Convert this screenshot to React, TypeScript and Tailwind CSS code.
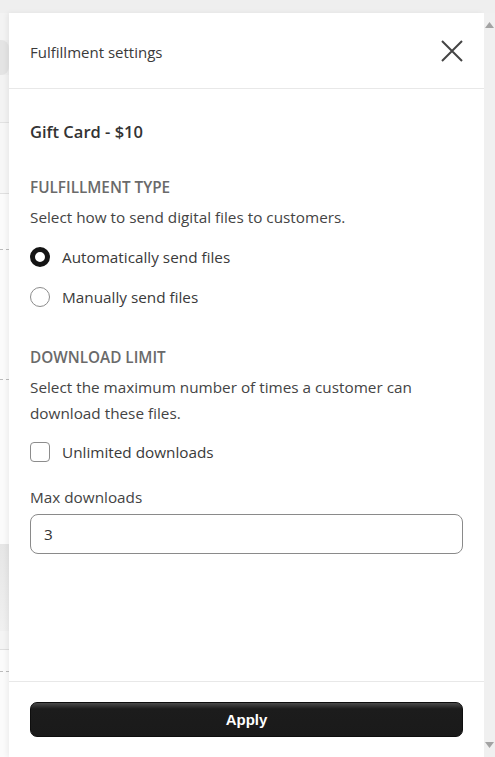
import React from 'react';

const font = { fontFamily: '"Open Sans", "Noto Sans", sans-serif' };

function BackdropStrip() {
  // the page behind the drawer, only a sliver of it shows on the left
  return (
    <div className="w-[9px] flex flex-col shrink-0">
      <div className="h-[27px] bg-[#f3f3f3]" />
      <div className="h-[35px] bg-[#e4e4e4] rounded-r-[8px]" />
      <div className="h-[47px] bg-[#f3f3f3]" />
      <div className="h-[71px] bg-[#f7f7f7] border-t border-[#e2e2e2]" />
      <div className="h-[56px] bg-[#fbfbfb] border-t border-[#e0e0e0]" />
      <div className="h-[130px] bg-[#fbfbfb] border-t border-dashed border-[#bcbcbc]" />
      <div className="h-[165px] bg-[#fbfbfb] border-t border-dashed border-[#bcbcbc]" />
      <div className="h-[87px] bg-linear-to-b from-[#e6e6e6] to-[#f0f0f0]" />
      <div className="h-[18px] bg-[#f4f4f4]" />
      <div className="h-[22px] bg-[#fbfbfb] border-t border-[#dedede]" />
      <div className="flex-1 bg-[#fbfbfb] border-t border-dashed border-[#bcbcbc]" />
    </div>
  );
}

function Scrollbar() {
  return (
    <div className="w-[11px] shrink-0 bg-[#f0f0f0] flex flex-col justify-between items-center py-[9px]">
      <svg width="9" height="6" viewBox="0 0 9 6">
        <path d="M4.5 0 L9 6 L0 6 Z" fill="#a3a3a3" />
      </svg>
      <svg width="9" height="6" viewBox="0 0 9 6">
        <path d="M0 0 L9 0 L4.5 6 Z" fill="#a3a3a3" />
      </svg>
    </div>
  );
}

function Radio({ checked, label }: { checked?: boolean; label: string }) {
  return (
    <label className="flex items-center h-6 gap-[12px] text-[15.3px] text-[#3a3a3a]">
      {checked ? (
        <span className="w-5 h-5 rounded-full border-[5px] border-[#141414] bg-white" />
      ) : (
        <span className="w-5 h-5 rounded-full border border-[#8c8c8c] bg-white" />
      )}
      {label}
    </label>
  );
}

export default function App() {
  return (
    <div className="h-screen w-full flex flex-col bg-[#efefef] overflow-hidden" style={font}>
      <div className="h-[13px] shrink-0" />
      <div className="flex-1 flex min-h-0">
        <BackdropStrip />
        <div className="flex-1 bg-white flex flex-col shadow-[-2px_0_5px_rgba(0,0,0,0.06)]">
          <div className="h-[76px] shrink-0 flex items-center justify-between pl-[21px] pr-[21px] border-b border-[#e8e8e8]">
            <span className="text-[15px] text-[#3a3a3a] pt-[3px]">Fulfillment settings</span>
            <button className="w-[22px] h-[22px] flex items-center justify-center">
              <svg width="22" height="22" viewBox="0 0 22 22">
                <path d="M1 1 L21 21 M21 1 L1 21" stroke="#444" strokeWidth="2" fill="none" />
              </svg>
            </button>
          </div>

          <div className="flex-1 px-[21px] flex flex-col">
            <div className="mt-[31px] h-6 leading-6 text-[16.5px] font-semibold text-[#333]">Gift Card - $10</div>

            <div className="mt-[33px] h-5 leading-5 text-[15.3px] font-semibold text-[#6a6a6a] uppercase">
              Fulfillment type
            </div>
            <p className="mt-[8px] leading-6 text-[15.3px] text-[#444]">
              Select how to send digital files to customers.
            </p>
            <div className="mt-[16px] flex flex-col gap-[16px]">
              <Radio checked label="Automatically send files" />
              <Radio label="Manually send files" />
            </div>

            <div className="mt-[38px] h-5 leading-5 text-[15.3px] font-semibold text-[#6a6a6a] uppercase">
              Download limit
            </div>
            <p className="mt-[7px] leading-[26px] text-[15.3px] text-[#444] pr-[30px]">
              Select the maximum number of times a customer can download these files.
            </p>
            <label className="mt-[14px] flex items-center h-6 gap-[12px] text-[15.3px] text-[#3a3a3a]">
              <span className="w-5 h-5 rounded-[4px] border border-[#8c8c8c] bg-white" />
              Unlimited downloads
            </label>

            <div className="mt-[21px] h-6 leading-6 text-[15.3px] text-[#444]">Max downloads</div>
            <div className="mt-[5px] h-10 rounded-[8px] border border-[#8a8a8a] flex items-center px-[13px] text-[15.3px] text-[#333]">
              3
            </div>
          </div>

          <div className="shrink-0 border-t border-[#e8e8e8] px-[21px] pt-[20px] pb-[20px]">
            <button
              className="w-full h-[35px] rounded-[7px] border border-[#0e0e0e] bg-linear-to-b from-[#4a4a4a] via-[#1c1c1c] via-[18%] to-[#1a1a1a] text-white text-[15px] font-bold pt-[1px]"
              style={{ fontFamily: '"Liberation Sans", Arial, sans-serif' }}
            >
              Apply
            </button>
          </div>
        </div>
        <Scrollbar />
      </div>
    </div>
  );
}
